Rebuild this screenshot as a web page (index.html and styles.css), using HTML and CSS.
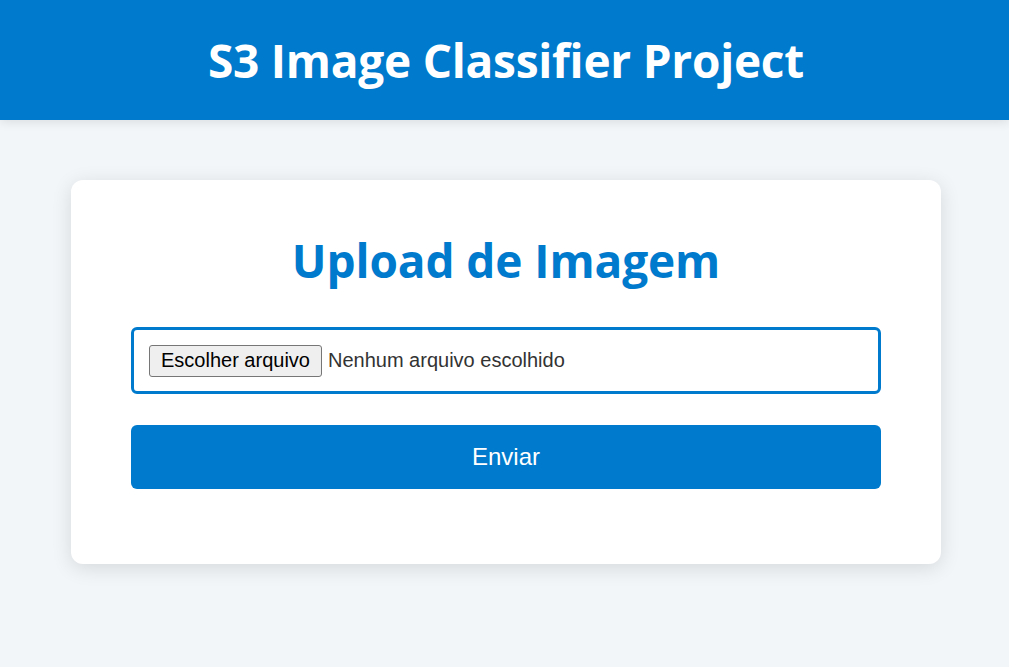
FILE: index.html
```html
<!DOCTYPE html>
<html lang="pt-BR">
<head>
<meta charset="utf-8">
<title>S3 Image Classifier Project</title>
<link rel="stylesheet" href="styles.css">
</head>
<body>
<header class="topbar">
  <h1 class="topbar-title">S3 Image Classifier Project</h1>
</header>
<main class="page">
  <section class="card">
    <h2 class="card-title">Upload de Imagem</h2>
    <form class="upload-form">
      <label class="file-field">
        <span class="file-button">Escolher arquivo</span>
        <span class="file-name">Nenhum arquivo escolhido</span>
      </label>
      <button type="button" class="submit">Enviar</button>
    </form>
  </section>
</main>
</body>
</html>
```
FILE: styles.css
```css
* { box-sizing: border-box; }
html, body { margin: 0; padding: 0; }
body {
  background: #f3f6f9;
  font-family: "Liberation Sans", Arial, sans-serif;
  color: #333;
  min-height: 667px;
}
.topbar {
  background: #007acc;
  height: 120px;
  display: flex;
  align-items: center;
  justify-content: center;
  padding-left: 3px;
  box-shadow: 0 2px 10px rgba(0,0,0,0.1);
}
.topbar-title {
  margin: 0;
  color: #fff;
  font-family: "Open Sans", "Noto Sans", sans-serif;
  font-weight: 700;
  font-size: 46px;
  letter-spacing: -0.25px;
}
.page {
  padding: 60px 68px 60px 71px;
}
.card {
  background: #fff;
  border-radius: 12px;
  padding: 48px 60px 75px;
  box-shadow: 0 4px 20px rgba(0,0,0,0.12);
}
.card-title {
  margin: 0 0 35px;
  text-align: center;
  color: #007acc;
  font-family: "Open Sans", "Noto Sans", sans-serif;
  font-weight: 700;
  font-size: 46px;
  line-height: 64px;
  letter-spacing: -0.1px;
}
.upload-form {
  display: flex;
  flex-direction: column;
  gap: 31px;
}
.file-field {
  display: flex;
  align-items: center;
  gap: 6px;
  height: 67px;
  border: 3px solid #007acc;
  border-radius: 6px;
  padding: 0 15px;
}
.file-button {
  height: 32px;
  display: inline-flex;
  align-items: center;
  padding: 0 11px;
  background: #efefef;
  border: 1px solid #767676;
  border-radius: 3px;
  color: #000;
  font-size: 20px;
}
.file-name {
  font-size: 20px;
  color: #333;
}
.submit {
  height: 64px;
  border: none;
  border-radius: 6px;
  background: #007acc;
  color: #fff;
  font-family: "Liberation Sans", Arial, sans-serif;
  font-size: 24px;
}
```
